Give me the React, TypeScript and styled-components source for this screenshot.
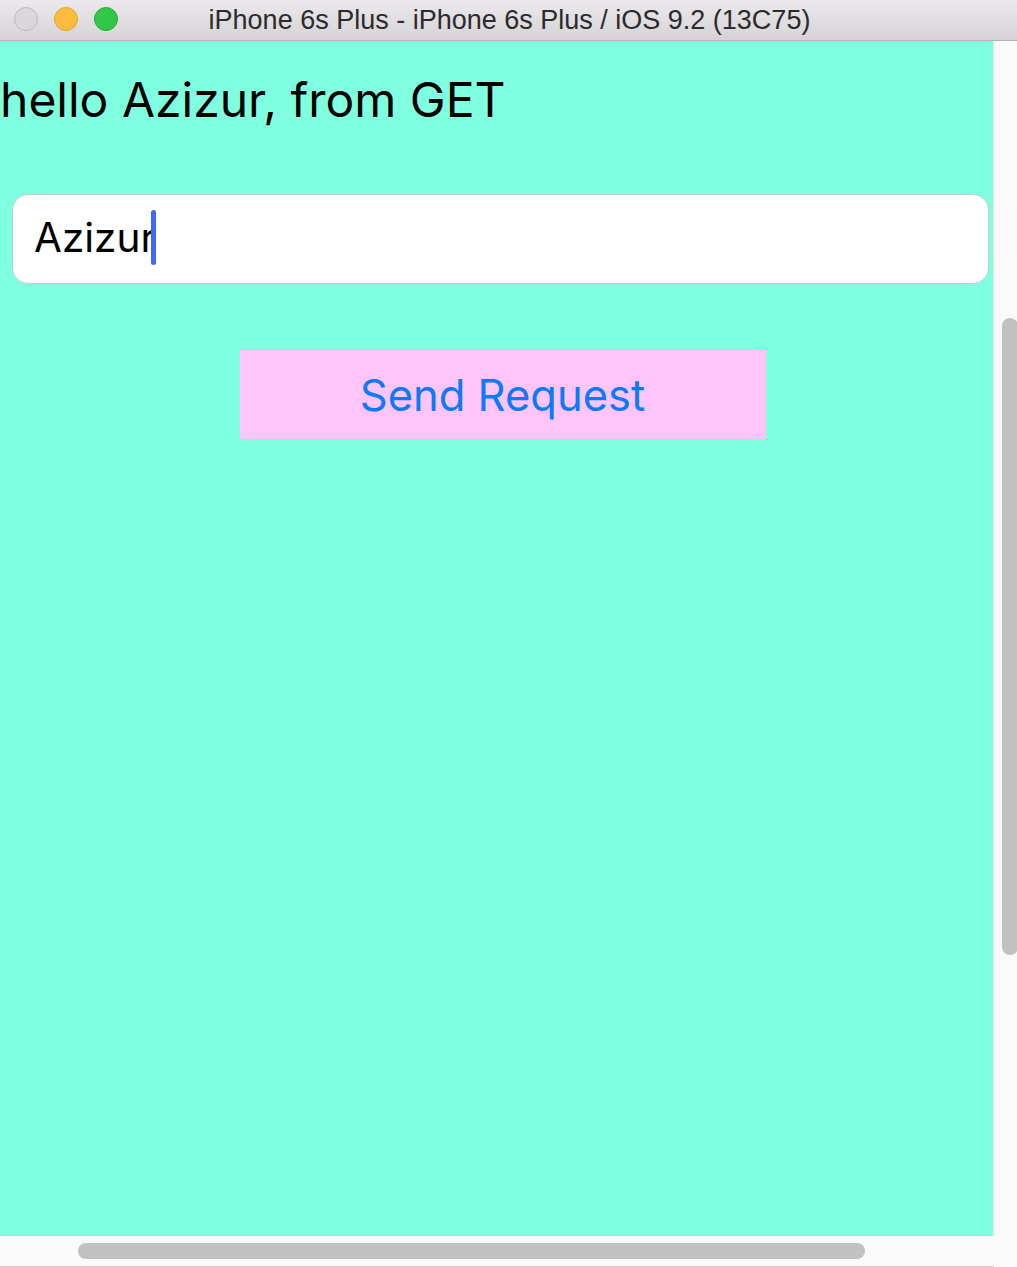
import * as React from "react";
import styled, { createGlobalStyle } from "styled-components";

const GlobalStyle = createGlobalStyle`
  html, body {
    margin: 0;
    padding: 0;
    height: 100%;
    overflow: hidden;
  }
  #root {
    height: 100%;
  }
`;

const Window = styled.div`
  display: flex;
  flex-direction: column;
  width: 1017px;
  height: 1267px;
  background: #fafafa;
  font-family: "Inter", "Roboto", "Noto Sans", sans-serif;
`;

const TitleBar = styled.div`
  position: relative;
  display: flex;
  align-items: center;
  justify-content: center;
  height: 40px;
  flex-shrink: 0;
  background: linear-gradient(#ebe9eb, #d5d3d5);
  border-bottom: 1px solid #b3b1b3;
`;

const Lights = styled.div`
  position: absolute;
  left: 14px;
  top: 7px;
  display: flex;
  gap: 16px;
`;

const Light = styled.span<{ $fill: string; $edge: string }>`
  width: 24px;
  height: 24px;
  border-radius: 50%;
  box-sizing: border-box;
  background: ${(p) => p.$fill};
  border: 1px solid ${(p) => p.$edge};
`;

const WindowTitle = styled.div`
  margin-left: 2px;
  font-family: "Liberation Sans", Arial, sans-serif;
  font-size: 27px;
  color: #2c2a2c;
`;

const Body = styled.div`
  flex: 1;
  display: flex;
  min-height: 0;
`;

const Viewport = styled.div`
  flex: 1;
  display: flex;
  flex-direction: column;
`;

const Screen = styled.div`
  flex: 1;
  display: flex;
  flex-direction: column;
  background: #7fffdf;
  border-right: 1px solid #e6e6e6;
`;

const Greeting = styled.div`
  margin-top: 29px;
  font-size: 48px;
  line-height: 60px;
  color: #000;
  white-space: nowrap;
`;

const Field = styled.div`
  display: flex;
  align-items: center;
  margin: 64px 4px 0 12px;
  height: 90px;
  box-sizing: border-box;
  padding: 0 0 4px 21px;
  background: #fff;
  border: 1px solid #c6cccb;
  border-radius: 16px;
  font-size: 40.5px;
  color: #000;
`;

const Caret = styled.span`
  display: inline-block;
  width: 5px;
  height: 55px;
  margin-left: -5px;
  border-radius: 3px;
  background: #4169f4;
`;

const ButtonRow = styled.div`
  display: flex;
  justify-content: center;
  margin-top: 66px;
  padding-left: 12px;
`;

const SendButton = styled.button`
  width: 526px;
  height: 89px;
  border: none;
  background: #ffc5fb;
  color: #0a7bff;
  font-family: inherit;
  font-size: 43.5px;
  cursor: pointer;
`;

const HTrack = styled.div`
  height: 31px;
  flex-shrink: 0;
  display: flex;
  align-items: flex-start;
  padding: 7px 0 0 78px;
  box-sizing: border-box;
  background: #fafafa;
  border-bottom: 1px solid #cfcfcf;
  box-shadow: 0 2px 2px rgba(0, 0, 0, 0.45);
`;

const HThumb = styled.div`
  width: 787px;
  height: 16px;
  border-radius: 8px;
  background: #c1c1c1;
`;

const VTrack = styled.div`
  width: 23px;
  flex-shrink: 0;
  padding: 277px 0 0 8px;
  box-sizing: border-box;
  background: #fafafa;
`;

const VThumb = styled.div`
  width: 16px;
  height: 637px;
  border-radius: 8px;
  background: #c1c1c1;
`;

export default function App() {
  const [name, setName] = React.useState("Azizur");
  return (
    <>
      <GlobalStyle />
      <Window>
        <TitleBar>
          <Lights>
            <Light $fill="#d9d7d9" $edge="#bdbbbd" />
            <Light $fill="#fdbc40" $edge="#e3a42f" />
            <Light $fill="#33c748" $edge="#27a83a" />
          </Lights>
          <WindowTitle>iPhone 6s Plus - iPhone 6s Plus / iOS 9.2 (13C75)</WindowTitle>
        </TitleBar>
        <Body>
          <Viewport>
            <Screen>
              <Greeting>hello {name}, from GET</Greeting>
              <Field>
                {name}
                <Caret />
              </Field>
              <ButtonRow>
                <SendButton onClick={() => setName(name)}>Send Request</SendButton>
              </ButtonRow>
            </Screen>
            <HTrack>
              <HThumb />
            </HTrack>
          </Viewport>
          <VTrack>
            <VThumb />
          </VTrack>
        </Body>
      </Window>
    </>
  );
}
